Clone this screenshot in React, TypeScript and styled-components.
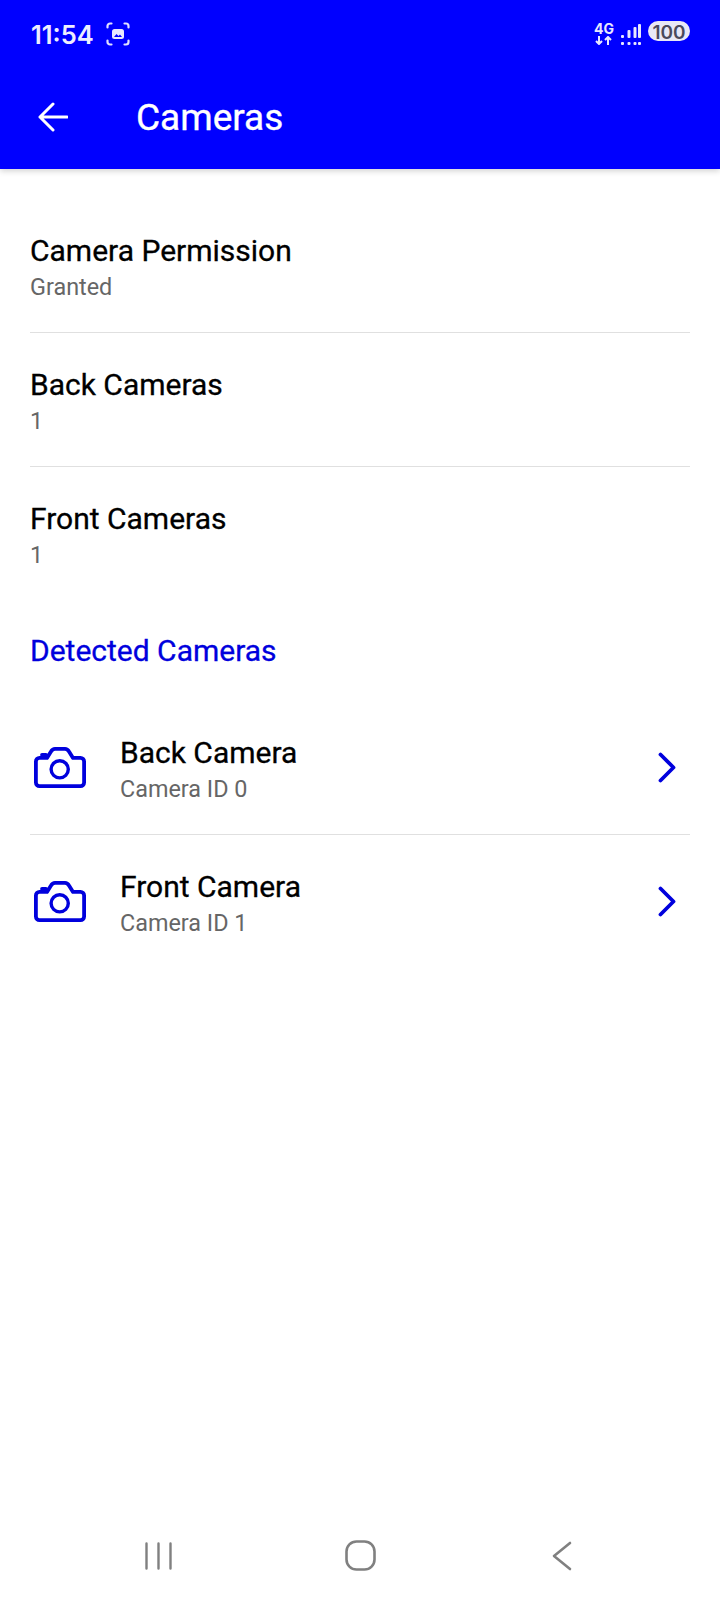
import styled, { createGlobalStyle } from "styled-components";
import { ReactNode } from "react";

const GlobalStyle = createGlobalStyle`
  html, body {
    margin: 0;
    padding: 0;
    background: #ffffff;
  }
  body {
    font-family: Roboto, "Liberation Sans", sans-serif;
  }
`;

const Screen = styled.div`
  display: flex;
  flex-direction: column;
  width: 720px;
  height: 1600px;
  overflow: hidden;
  background: #ffffff;
`;

const Header = styled.header`
  flex-shrink: 0;
  height: 169px;
  background: #0000ff;
  box-shadow: 0 2px 6px rgba(0, 0, 0, 0.18);
  color: #ffffff;
`;

const StatusBar = styled.div`
  display: flex;
  align-items: center;
  justify-content: space-between;
  height: 68px;
  padding: 0 30px 0 31px;
`;

const StatusLeft = styled.div`
  display: flex;
  align-items: center;
  gap: 12px;
`;

const StatusRight = styled.div`
  display: flex;
  align-items: center;
  gap: 7px;
`;

const Clock = styled.span`
  font-family: Inter, Roboto, sans-serif;
  font-size: 25.5px;
  font-weight: 600;
  color: #eeeeff;
`;

const Battery = styled.span`
  box-sizing: border-box;
  display: flex;
  align-items: center;
  justify-content: center;
  width: 42px;
  height: 20px;
  margin-bottom: 6px;
  padding-top: 3px;
  border-radius: 10px;
  background: #e8e8f6;
  color: #4a4a5c;
  font-family: Inter, Roboto, sans-serif;
  font-size: 19px;
  font-weight: 600;
  line-height: 17px;
`;

const NetworkLabel = styled.div`
  display: flex;
  flex-direction: column;
  align-items: center;
  gap: 2px;
  width: 20px;
  color: #e8e8ff;
  font-family: Inter, Roboto, sans-serif;
  font-size: 14px;
  font-weight: 700;
  line-height: 10px;
`;

const TopBar = styled.div`
  display: flex;
  align-items: center;
  gap: 68px;
  height: 98px;
  padding: 0 38px;
`;

const Title = styled.h1`
  margin: 0;
  font-size: 37px;
  font-weight: 450;
  -webkit-text-stroke: 0.35px #ffffff;
`;

const Content = styled.main`
  flex: 1;
  padding: 30px 30px 0;
`;

const Row = styled.div<{ $divided?: boolean }>`
  box-sizing: border-box;
  display: flex;
  align-items: center;
  height: 134px;
  padding-top: 5px;
  border-bottom: ${(p) => (p.$divided ? "1px solid #e0e0e0" : "0 none")};
`;

const RowText = styled.div`
  display: flex;
  flex: 1;
  flex-direction: column;
  gap: 1px;
`;

const RowTitle = styled.div`
  font-size: 30px;
  font-weight: 450;
  line-height: 36px;
  color: #000000;
  -webkit-text-stroke: 0.3px #000000;
`;

const RowSub = styled.div`
  font-size: 23.4px;
  line-height: 34px;
  color: #666666;
`;

const IconSlot = styled.div`
  display: flex;
  flex-shrink: 0;
  width: 86px;
  margin-top: -6px;
  padding-left: 4px;
`;

const ChevronSlot = styled.div`
  display: flex;
  margin: -6px 14px 0 0;
`;

const SectionTitle = styled.h2`
  margin: 0;
  padding: 32px 0 32px;
  font-size: 30px;
  font-weight: 450;
  line-height: 36px;
  color: #0000dd;
  -webkit-text-stroke: 0.3px #0000dd;
`;

const NavBar = styled.nav`
  display: grid;
  flex-shrink: 0;
  grid-template-columns: repeat(3, 201.5px);
  justify-content: center;
  place-items: center;
  height: 89px;
`;

const CameraIcon = () => (
  <svg width="52" height="41" viewBox="0 0 52 41" fill="none" stroke="#0000dd" strokeWidth="3.8" strokeLinecap="round" strokeLinejoin="round">
    <path d="M5.5 10.9H13L17 4.5Q18.5 1.9 21 1.9H31Q33.5 1.9 35 4.5L39 10.9H46.5a3.6 3.6 0 0 1 3.6 3.6V35.5a3.6 3.6 0 0 1-3.6 3.6H5.5a3.6 3.6 0 0 1-3.6-3.6V14.5a3.6 3.6 0 0 1 3.6-3.6z" />
    <path d="M8 8h4" />
    <circle cx="25.7" cy="22.3" r="8.6" strokeWidth="3.4" />
  </svg>
);

const Chevron = () => (
  <svg width="18" height="31" viewBox="0 0 18 31" fill="none" stroke="#0000dd" strokeWidth="3.8" strokeLinecap="round" strokeLinejoin="round">
    <path d="M2.5 2.5L15.5 15.5L2.5 28.5" />
  </svg>
);

const BackArrow = () => (
  <svg width="30" height="30" viewBox="0 0 30 30" fill="none" stroke="#ffffff" strokeWidth="3" strokeLinecap="round" strokeLinejoin="round">
    <path d="M29 15H2M15 2L2 15l13 13" />
  </svg>
);

const ScreenshotIcon = () => (
  <svg width="24" height="24" viewBox="0 0 24 24" fill="none" stroke="#e0e0ff" strokeWidth="2.2" strokeLinecap="round">
    <path d="M1.5 5.5V4a2.5 2.5 0 0 1 2.5-2.5h1.5M18.5 1.5H20A2.5 2.5 0 0 1 22.5 4v1.5M22.5 18.5V20a2.5 2.5 0 0 1-2.5 2.5h-1.5M5.5 22.5H4A2.5 2.5 0 0 1 1.5 20v-1.5" />
    <rect x="6" y="7" width="12" height="10" rx="2.5" fill="#e8e8ff" stroke="none" />
    <path d="M8 15l2.5-3 2 2 1.5-1.5 2 2.5z" fill="#0000ff" stroke="none" />
  </svg>
);

const ArrowsIcon = () => (
  <svg width="18" height="9" viewBox="0 0 18 9" fill="none" stroke="#e8e8ff" strokeWidth="2">
    <path d="M4 0v8M1 5l3 3 3-3M13 9V1M10 4l3-3 3 3" />
  </svg>
);

const SignalIcon = () => (
  <svg width="20" height="21" viewBox="0 0 20 21" fill="#e8e8ff">
    <rect x="0" y="11" width="3" height="3" rx="1" />
    <rect x="0" y="18" width="3" height="3" rx="1" />
    <rect x="6.5" y="6" width="3" height="8" rx="1" />
    <rect x="6.5" y="18" width="3" height="3" rx="1" />
    <rect x="12.5" y="3" width="3" height="11" rx="1" />
    <rect x="12.5" y="18" width="3" height="3" rx="1" />
    <rect x="17" y="0" width="3" height="14" rx="1" />
    <rect x="17" y="18" width="3" height="3" rx="1" />
  </svg>
);

const RecentsIcon = () => (
  <svg width="27" height="28" viewBox="0 0 27 28" fill="none" stroke="#808080" strokeWidth="2.4" strokeLinecap="round">
    <path d="M1.5 1.5v25M13.5 1.5v25M25.5 1.5v25" />
  </svg>
);

const HomeIcon = () => (
  <svg width="31" height="31" viewBox="0 0 31 31" fill="none" stroke="#808080" strokeWidth="2.6">
    <rect x="1.5" y="1.5" width="28" height="28" rx="10" />
  </svg>
);

const NavBackIcon = () => (
  <svg width="20" height="30" viewBox="0 0 20 30" fill="none" stroke="#808080" strokeWidth="2.6" strokeLinecap="round" strokeLinejoin="round">
    <path d="M18 2L2 15l16 13" />
  </svg>
);

const InfoRow = ({ title, value, divided }: { title: string; value: string; divided?: boolean }) => (
  <Row $divided={divided}>
    <RowText>
      <RowTitle>{title}</RowTitle>
      <RowSub>{value}</RowSub>
    </RowText>
  </Row>
);

const CameraRow = ({ title, value, divided, icon }: { title: string; value: string; divided?: boolean; icon: ReactNode }) => (
  <Row $divided={divided}>
    <IconSlot>{icon}</IconSlot>
    <RowText>
      <RowTitle>{title}</RowTitle>
      <RowSub>{value}</RowSub>
    </RowText>
    <ChevronSlot>
      <Chevron />
    </ChevronSlot>
  </Row>
);

export default function App() {
  return (
    <Screen>
      <GlobalStyle />
      <Header>
        <StatusBar>
          <StatusLeft>
            <Clock>11:54</Clock>
            <ScreenshotIcon />
          </StatusLeft>
          <StatusRight>
            <NetworkLabel>
              4G
              <ArrowsIcon />
            </NetworkLabel>
            <SignalIcon />
            <Battery>100</Battery>
          </StatusRight>
        </StatusBar>
        <TopBar>
          <BackArrow />
          <Title>Cameras</Title>
        </TopBar>
      </Header>
      <Content>
        <InfoRow title="Camera Permission" value="Granted" divided />
        <InfoRow title="Back Cameras" value="1" divided />
        <InfoRow title="Front Cameras" value="1" />
        <SectionTitle>Detected Cameras</SectionTitle>
        <CameraRow title="Back Camera" value="Camera ID 0" divided icon={<CameraIcon />} />
        <CameraRow title="Front Camera" value="Camera ID 1" icon={<CameraIcon />} />
      </Content>
      <NavBar>
        <RecentsIcon />
        <HomeIcon />
        <NavBackIcon />
      </NavBar>
    </Screen>
  );
}
